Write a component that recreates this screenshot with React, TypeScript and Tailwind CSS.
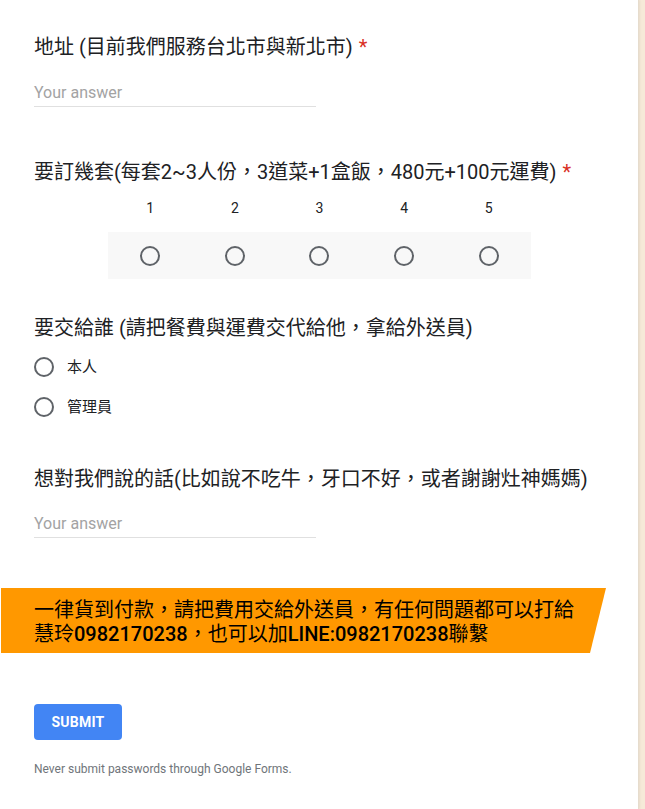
import React from "react";

const Radio = () => (
  <span className="block w-[20px] h-[20px] rounded-full border-2 border-[#5f6368] bg-transparent" />
);

const AnswerLine = ({ className = "" }: { className?: string }) => (
  <div
    className={`w-[282px] h-[26px] border-b border-[#e0e0e0] text-[16px] leading-[24px] text-[#a3a3a3] ${className}`}
  >
    Your answer
  </div>
);

const Required = () => <span className="text-[#d93025] ml-[6px]">*</span>;

const App = () => {
  const scale = [1, 2, 3, 4, 5];

  return (
    <div className="flex min-h-[809px] bg-[#f6ead8] font-[Roboto,'Noto_Sans_CJK_TC',sans-serif] text-[#202124]">
      <div className="w-[639px] bg-white border-r border-[#e6dccd] shadow-[1px_0_2px_rgba(0,0,0,0.06)]">
        <div className="pl-[34px]">
          {/* address */}
          <div className="pt-[35px] text-[20px] leading-[24px]">
            地址 (目前我們服務台北市與新北市)
            <Required />
          </div>
          <AnswerLine className="mt-[22px]" />

          {/* how many sets */}
          <div className="mt-[53px] text-[20px] leading-[24px]">
            要訂幾套(每套2~3人份，3道菜+1盒飯，480元+100元運費)
            <Required />
          </div>
          <div className="ml-[74px] w-[423px]">
            <div className="mt-[14px] grid grid-cols-5 text-[14px] leading-[20px] text-center">
              {scale.map((n) => (
                <span key={n}>{n}</span>
              ))}
            </div>
            <div className="mt-[14px] h-[47px] bg-[#f8f8f8] grid grid-cols-5 items-center justify-items-center">
              {scale.map((n) => (
                <Radio key={n} />
              ))}
            </div>
          </div>

          {/* who receives */}
          <div className="mt-[37px] text-[20px] leading-[24px]">
            要交給誰 (請把餐費與運費交代給他，拿給外送員)
          </div>
          <div className="mt-[15px] flex flex-col gap-[16px]">
            {["本人", "管理員"].map((o) => (
              <label key={o} className="flex items-center gap-[13px] h-[24px]">
                <Radio />
                <span className="text-[15px] leading-[24px]">{o}</span>
              </label>
            ))}
          </div>

          {/* message */}
          <div className="mt-[48px] text-[20px] leading-[24px]">
            想對我們說的話(比如說不吃牛，牙口不好，或者謝謝灶神媽媽)
          </div>
          <AnswerLine className="mt-[21px]" />
        </div>

        {/* notice */}
        <div className="mt-[50px] ml-[1px] h-[65px] bg-[#ff9800] pl-[33px] pt-[10px] text-[20px] leading-[24px] text-black [clip-path:polygon(0_0,605px_0,589px_100%,0_100%)]">
          <div>一律貨到付款，請把費用交給外送員，有任何問題都可以打給</div>
          <div>
            慧玲<span className="font-medium">0982170238</span>，也可以加
            <span className="font-medium">LINE:0982170238</span>聯繫
          </div>
        </div>

        <div className="pl-[34px]">
          <button className="mt-[51px] w-[88px] h-[36px] rounded-[4px] bg-[#4285f4] text-white text-[14px] font-bold tracking-[0.25px]">
            SUBMIT
          </button>
          <div className="mt-[21px] text-[12px] leading-[16px] text-[#70757a]">
            Never submit passwords through Google Forms.
          </div>
        </div>
      </div>
    </div>
  );
};

export default App;
